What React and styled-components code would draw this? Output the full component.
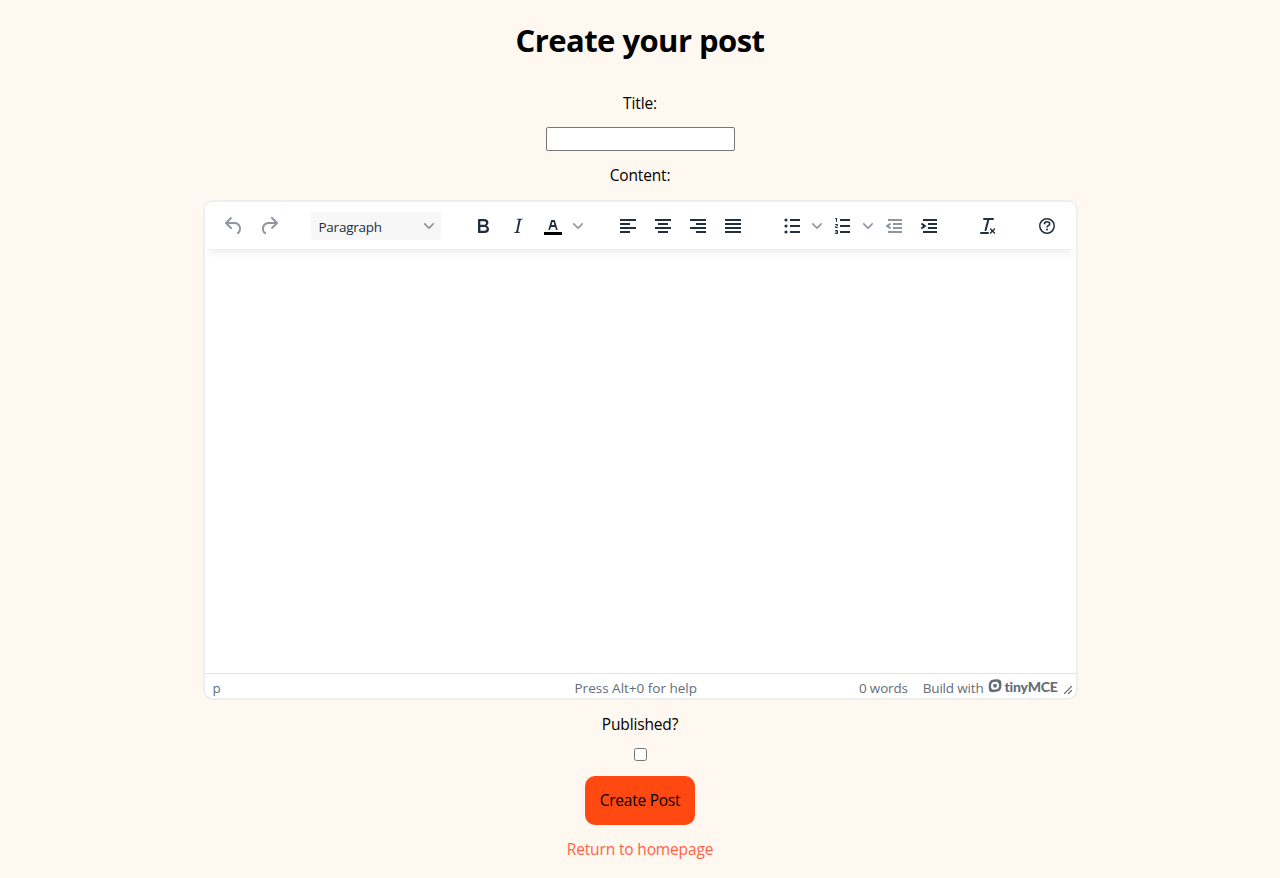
import React from "react";
import styled, { createGlobalStyle } from "styled-components";

const GlobalStyle = createGlobalStyle`
  *, *::before, *::after { box-sizing: border-box; }
  body {
    margin: 0;
    background: #fff8f0;
    color: #000;
    font-family: "Segoe UI", "Open Sans", "Noto Sans", sans-serif;
    font-size: 15.5px;
    letter-spacing: -0.15px;
  }
`;

const Page = styled.main`
  display: flex;
  flex-direction: column;
  align-items: center;
  min-height: 878px;
  padding-top: 18px;
`;

const Heading = styled.h1`
  margin: 0 0 32px;
  font-size: 31px;
  line-height: 44px;
  height: 43px;
  font-weight: 700;
  letter-spacing: -0.55px;
`;

const Form = styled.form`
  display: flex;
  flex-direction: column;
  align-items: center;
`;

const Label = styled.label`
  line-height: 21px;
`;

const TitleInput = styled.input`
  width: 189px;
  height: 24px;
  margin: 13px 0 14px;
  border: 1px solid #767676;
  border-radius: 2px;
  background: #fff;
`;

const Checkbox = styled.input`
  width: 13px;
  height: 13px;
  margin: 13px 0 15px;
`;

const SubmitButton = styled.button`
  width: 110px;
  height: 49px;
  margin-bottom: 14px;
  padding: 0 0 1px;
  border: 0;
  border-radius: 10px;
  background: #ff4911;
  color: #000;
  font: inherit;
  letter-spacing: -0.25px;
  white-space: nowrap;
`;

const HomeLink = styled.a`
  color: #ff6347;
  line-height: 21px;
  text-decoration: none;
`;

const Editor = styled.section`
  display: flex;
  flex-direction: column;
  width: 875px;
  height: 500px;
  margin: 14px 0;
  border: 2px solid #eee;
  border-radius: 10px;
  background: #fff;
  overflow: hidden;
`;

const Toolbar = styled.div`
  display: flex;
  gap: 25px;
  flex: none;
  height: 47px;
  padding: 10px 12px 9px;
  background: #fff;
  box-shadow: 0 2px 2px -2px rgba(34, 47, 62, 0.1), 0 8px 8px -4px rgba(34, 47, 62, 0.07);
`;

const Group = styled.div`
  display: flex;
  gap: 1px;
`;

const ToolButton = styled.button`
  display: flex;
  align-items: center;
  justify-content: center;
  width: ${({ $narrow }) => ($narrow ? "16px" : "34px")};
  height: 28px;
  padding: 0;
  border: 0;
  background: none;
  color: #222f3e;
  opacity: ${({ $muted }) => ($muted ? 0.5 : 1)};
`;

const Split = styled.div`
  display: flex;
`;

const BlockSelect = styled.button`
  display: flex;
  align-items: center;
  justify-content: space-between;
  width: 130px;
  height: 28px;
  padding: 0 7px 0 8px;
  border: 0;
  border-radius: 3px;
  background: #f7f7f7;
  color: #222f3e;
  font: inherit;
  font-size: 13.5px;
  letter-spacing: -0.25px;
`;

const SelectLabel = styled.span`
  padding-top: 1px;
`;

const Icon = styled.svg`
  display: block;
  flex: none;
  fill: currentColor;
  opacity: ${({ $faded }) => ($faded ? 0.5 : 1)};
`;

const Content = styled.div`
  flex: 1;
`;

const StatusBar = styled.footer`
  display: grid;
  grid-template-columns: 362px auto 1fr;
  align-items: start;
  flex: none;
  height: 25px;
  padding: 5px 3px 0 8px;
  border-top: 1px solid #e3e3e3;
  color: #646d78;
  font-size: 13.5px;
  line-height: 19px;
  letter-spacing: 0;
  white-space: nowrap;
`;

const StatusText = styled.span`
  height: 19px;
`;

const StatusEnd = styled.div`
  display: flex;
  justify-content: flex-end;
  letter-spacing: -0.18px;
`;

const Branding = styled.span`
  display: flex;
  margin: 0 5px 0 15px;
`;

const Logo = styled.span`
  display: flex;
  align-items: flex-start;
  gap: 3px;
  height: 15px;
  margin-left: 4px;
`;

const LogoText = styled.span`
  width: 53px;
  font-family: Lato, sans-serif;
  font-size: 14px;
  font-weight: 900;
  line-height: 15px;
  letter-spacing: -0.2px;
`;

const ResizeHandle = styled.span`
  padding-top: 6px;
`;

const lines = (rows) => rows.map(([x, y, w]) => `M${x} ${y}h${w}v2h${-w}z`).join("");

const icons = {
  undo: "M6.4 8H12c3.7 0 6.2 2 6.8 5.1.6 2.7-.4 5.6-2.3 6.8a1 1 0 0 1-1-1.8c1.1-.6 1.8-2.7 1.4-4.6-.5-2.1-2.1-3.5-4.9-3.5H6.4l3.3 3.3a1 1 0 1 1-1.4 1.4l-5-5a1 1 0 0 1 0-1.4l5-5a1 1 0 0 1 1.4 1.4L6.4 8Z",
  redo: "M17.6 10H12c-2.8 0-4.4 1.4-4.9 3.5-.4 2 .3 4 1.4 4.6a1 1 0 1 1-1 1.8c-2-1.2-2.9-4.1-2.3-6.8.6-3 3-5.1 6.8-5.1h5.6l-3.3-3.3a1 1 0 1 1 1.4-1.4l5 5a1 1 0 0 1 0 1.4l-5 5a1 1 0 0 1-1.4-1.4l3.3-3.3Z",
  bold: "M7.8 19c-.3 0-.5 0-.6-.2l-.2-.5V5.7c0-.2 0-.4.2-.5l.6-.2h5c1.5 0 2.7.3 3.5 1 .7.6 1.1 1.4 1.1 2.5a3 3 0 0 1-.6 1.9c-.4.6-1 1-1.6 1.2.4.1.9.3 1.3.6s.8.7 1 1.2c.4.4.5 1 .5 1.6 0 1.3-.4 2.3-1.3 3-.8.7-2.1 1-3.8 1H7.8Zm5-8.3c.6 0 1.2-.1 1.6-.5.4-.3.6-.7.6-1.3 0-1.1-.8-1.7-2.3-1.7H9.3v3.5h3.4Zm.5 6c.7 0 1.3-.1 1.7-.4.4-.4.6-.9.6-1.5s-.2-1-.7-1.4c-.4-.3-1-.4-2-.4H9.4v3.8h4Z",
  italic: "m16.7 4.7-.1.9h-.3c-.6 0-1 0-1.4.3-.3.3-.4.6-.5 1.1l-2.1 9.8v.6c0 .5.4.8 1.4.8h.2l-.2.8H8l.2-.8h.2c1.1 0 1.8-.5 2-1.5l2-9.8.1-.5c0-.6-.4-.8-1.4-.8h-.3l.2-.9h5.8Z",
  alignLeft: lines([[4, 5, 16], [4, 9, 10], [4, 13, 16], [4, 17, 10]]),
  alignCenter: lines([[4, 5, 16], [7, 9, 10], [4, 13, 16], [7, 17, 10]]),
  alignRight: lines([[4, 5, 16], [10, 9, 10], [4, 13, 16], [10, 17, 10]]),
  justify: lines([[4, 5, 16], [4, 9, 16], [4, 13, 16], [4, 17, 16]]),
  bullets: lines([[10, 5, 10], [10, 11, 10], [10, 17, 10]]) +
    [6, 12, 18].map((y) => `M4.4 ${y}a1.6 1.6 0 1 0 3.2 0a1.6 1.6 0 1 0-3.2 0z`).join(""),
  numbers: lines([[9, 5, 10], [9, 11, 10], [9, 17, 10]]) +
    "M6 4v3.5c0 .3-.2.5-.5.5a.5.5 0 0 1-.5-.5V5h-.5a.5.5 0 0 1 0-1H6Zm-1 8.8.2.2h1.3c.3 0 .5.2.5.5s-.2.5-.5.5H4.9a1 1 0 0 1-.9-1V13c0-.4.3-.8.6-1l1.2-.4.2-.3a.2.2 0 0 0-.2-.2H4.5a.5.5 0 0 1-.5-.5c0-.3.2-.5.5-.5h1.6c.5 0 .9.4.9 1v.1c0 .4-.3.8-.6 1l-1.2.4-.2.3ZM7 17v2c0 .6-.4 1-1 1H4.5a.5.5 0 0 1 0-1h1.2c.2 0 .3-.1.3-.3 0-.2-.1-.3-.3-.3H4.4a.4.4 0 1 1 0-.8h1.3c.2 0 .3-.1.3-.3 0-.2-.1-.3-.3-.3H4.5a.5.5 0 1 1 0-1H6c.6 0 1 .4 1 1Z",
  outdent: lines([[6, 5, 14], [11, 9, 9], [11, 13, 9], [6, 17, 14]]) +
    "M8.6 13.2a1 1 0 0 1-1.2 1.6l-3-2a1 1 0 0 1 0-1.6l3-2a1 1 0 0 1 1.2 1.6L6.8 12l1.8 1.2Z",
  indent: lines([[6, 5, 14], [11, 9, 9], [11, 13, 9], [6, 17, 14]]) +
    "M4.4 13.2 6.2 12l-1.8-1.2a1 1 0 0 1 1.2-1.6l3 2a1 1 0 0 1 0 1.6l-3 2a1 1 0 1 1-1.2-1.6Z",
  clear: "M13.2 6a1 1 0 0 1 0 .2l-2.6 10a1 1 0 0 1-1 .8h-.2a.8.8 0 0 1-.8-1l2.6-10H8a1 1 0 1 1 0-2h9a1 1 0 0 1 0 2h-3.8ZM5 18h7a1 1 0 0 1 0 2H5a1 1 0 0 1 0-2Zm13 1.5L16.5 18 15 19.5a.7.7 0 0 1-1-1l1.5-1.5-1.5-1.5a.7.7 0 0 1 1-1l1.5 1.5 1.5-1.5a.7.7 0 0 1 1 1L17.5 17l1.5 1.5a.7.7 0 0 1-1 1Z",
};

const Tool = ({ name, label, muted }) => (
  <ToolButton type="button" aria-label={label} $muted={muted}>
    <Icon width="24" height="24" viewBox="0 0 24 24" fillRule="evenodd">
      <path d={icons[name]} />
    </Icon>
  </ToolButton>
);

const Chevron = () => (
  <Icon width="10" height="10" viewBox="0 0 10 10" $faded>
    <path d="M8.7 2.2c.3-.3.8-.3 1 0 .4.4.4.9 0 1.2L5.7 7.8c-.3.3-.9.3-1.2 0L.2 3.4a.8.8 0 0 1 0-1.2c.3-.3.8-.3 1.1 0L5 6l3.7-3.8Z" />
  </Icon>
);

const MenuArrow = ({ label }) => (
  <ToolButton type="button" aria-label={label} $narrow>
    <Chevron />
  </ToolButton>
);

export default function App() {
  return (
    <>
      <GlobalStyle />
      <Page>
        <Heading>Create your post</Heading>
        <Form>
          <Label htmlFor="title">Title:</Label>
          <TitleInput id="title" type="text" />
          <Label>Content:</Label>
          <Editor>
            <Toolbar>
              <Group>
                <Tool name="undo" label="Undo" muted />
                <Tool name="redo" label="Redo" muted />
              </Group>
              <BlockSelect type="button">
                <SelectLabel>Paragraph</SelectLabel>
                <Chevron />
              </BlockSelect>
              <Group>
                <Tool name="bold" label="Bold" />
                <Tool name="italic" label="Italic" />
                <Split>
                  <ToolButton type="button" aria-label="Text color">
                    <Icon width="24" height="24" viewBox="0 0 24 24" fillRule="evenodd">
                      <path d="M3 18h18v3H3z" fill="#000" />
                      <path d="M8.7 16h-.8a.5.5 0 0 1-.5-.6l2.7-9c.1-.3.3-.4.5-.4h2.8c.2 0 .4.1.5.4l2.7 9a.5.5 0 0 1-.5.6h-.8a.5.5 0 0 1-.4-.4l-.7-2.2c0-.3-.3-.4-.5-.4h-3.4c-.2 0-.4.1-.5.4l-.7 2.2c0 .3-.2.4-.4.4Zm2.6-7.6-.6 2a.5.5 0 0 0 .5.6h1.6a.5.5 0 0 0 .5-.6l-.6-2c0-.3-.3-.4-.5-.4h-.4c-.2 0-.4.1-.5.4Z" />
                    </Icon>
                  </ToolButton>
                  <MenuArrow label="Text color menu" />
                </Split>
              </Group>
              <Group>
                <Tool name="alignLeft" label="Align left" />
                <Tool name="alignCenter" label="Align center" />
                <Tool name="alignRight" label="Align right" />
                <Tool name="justify" label="Justify" />
              </Group>
              <Group>
                <Split>
                  <Tool name="bullets" label="Bullet list" />
                  <MenuArrow label="Bullet list menu" />
                </Split>
                <Split>
                  <Tool name="numbers" label="Numbered list" />
                  <MenuArrow label="Numbered list menu" />
                </Split>
                <Tool name="outdent" label="Decrease indent" muted />
                <Tool name="indent" label="Increase indent" />
              </Group>
              <Tool name="clear" label="Clear formatting" />
              <ToolButton type="button" aria-label="Help">
                <Icon width="24" height="24" viewBox="0 0 24 24">
                  <circle cx="12" cy="12" r="7.25" fill="none" stroke="currentColor" strokeWidth="1.5" />
                  <path d="M9.4 10.2c0-1.6 1-2.5 2.6-2.5s2.7.9 2.7 2.2c0 1.7-2.7 1.8-2.7 3.5" fill="none" stroke="currentColor" strokeWidth="1.6" />
                  <circle cx="12" cy="15.6" r="1" />
                </Icon>
              </ToolButton>
            </Toolbar>
            <Content />
            <StatusBar>
              <StatusText>p</StatusText>
              <StatusText>Press Alt+0 for help</StatusText>
              <StatusEnd>
                <StatusText>0 words</StatusText>
                <Branding>
                  <StatusText>Build with</StatusText>
                  <Logo>
                    <Icon width="14" height="14" viewBox="0 0 14 14">
                      <path d="M6 1.8 8.800 1.500C11.100 1.300 12.200 2.500 12.200 4.600V7c0 2.600-1.300 4.200-3.600 4.500l-3.200.4C3.100 12.200 1.900 11 1.900 9V6.700C1.900 4.100 3.500 2.100 6 1.800Z" fill="none" stroke="currentColor" strokeWidth="2.4" />
                      <path d="M1.500 12 4.200 9.900M9.900 4 12.600 1.900" fill="none" stroke="currentColor" strokeWidth="1.600" />
                      <rect x="5.300" y="5" width="3.500" height="3.500" rx=".8" />
                    </Icon>
                    <LogoText>tinyMCE</LogoText>
                  </Logo>
                </Branding>
                <ResizeHandle>
                  <Icon width="10" height="10" viewBox="0 0 10 10">
                    <path d="M1.500 8.500l7-7M5.500 8.500l3-3" fill="none" stroke="currentColor" strokeWidth="1.100" strokeLinecap="round" />
                  </Icon>
                </ResizeHandle>
              </StatusEnd>
            </StatusBar>
          </Editor>
          <Label htmlFor="published">Published?</Label>
          <Checkbox id="published" type="checkbox" />
          <SubmitButton type="button">Create Post</SubmitButton>
        </Form>
        <HomeLink href="#">Return to homepage</HomeLink>
      </Page>
    </>
  );
}
